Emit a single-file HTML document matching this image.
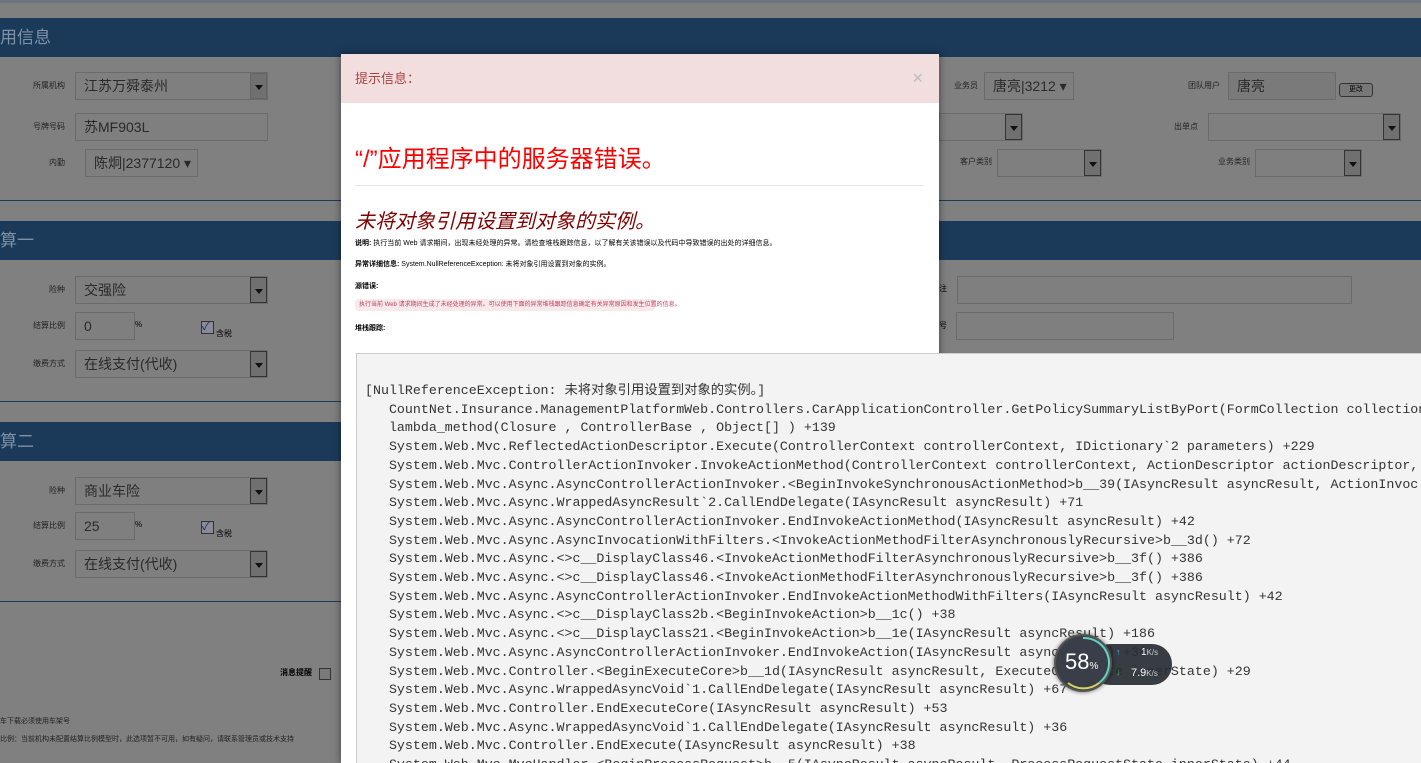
<!DOCTYPE html>
<html><head><meta charset="utf-8"><style>
*{margin:0;padding:0;box-sizing:border-box}
body{width:1421px;height:763px;overflow:hidden;position:relative;background:#808080;font-family:"Liberation Sans","Noto Sans CJK SC",sans-serif}
.a{position:absolute}
.bar{position:absolute;left:0;width:1421px;height:39px;background:#1b3a5a;color:#7f91a6;font-size:17px;line-height:39px}
.line{position:absolute;left:0;width:1421px;height:1px;background:#1d3b5b}
.lbl{position:absolute;font-size:8px;color:#222;text-align:right}
.inp{position:absolute;border:1px solid #6b6b6b;background:#7f7f7f;color:#2a2a2a;font-size:14px;padding-left:8px;line-height:26px;height:28px}
.sel-btn{position:absolute;right:0;top:0;width:17px;height:26px;border:1px solid #333;background:#707070}
.sel-btn:after{content:"";position:absolute;left:4px;top:11px;border:4px solid transparent;border-top:5px solid #111}
.mono{font-family:"Liberation Mono","Noto Sans CJK SC",monospace;font-size:13.3px;line-height:18.7px;color:#333;white-space:pre}
</style></head><body>
<div class="a" style="left:0;top:0;width:1421px;height:3px;background:#6c7480"></div>
<div class="bar" style="top:18px">用信息</div>
<div class="line" style="top:200px"></div>
<div class="bar" style="top:221px">算一</div>
<div class="line" style="top:401px"></div>
<div class="bar" style="top:422px">算二</div>
<div class="line" style="top:601px"></div>

<div class="lbl" style="left:20px;top:80px;width:45px">所属机构</div>
<div class="inp" style="left:75px;top:72px;width:193px">江苏万舜泰州<div class="sel-btn" style="border-color:#666"></div></div>
<div class="lbl" style="left:20px;top:121px;width:45px">号牌号码</div>
<div class="inp" style="left:75px;top:113px;width:193px">苏MF903L</div>
<div class="lbl" style="left:20px;top:157px;width:45px">内勤</div>
<div class="inp" style="left:85px;top:149px;width:113px">陈炯|2377120 ▾</div>

<div class="lbl" style="left:20px;top:284px;width:45px">险种</div>
<div class="inp" style="left:75px;top:276px;width:193px">交强险<div class="sel-btn"></div></div>
<div class="lbl" style="left:20px;top:320px;width:45px">结算比例</div>
<div class="inp" style="left:75px;top:312px;width:60px">0</div>
<div class="a" style="left:135px;top:320px;font-size:8px">%</div>
<div class="a" style="left:201px;top:321px;width:13px;height:13px;border:1px solid #333;background:#8a8a99;font-size:11px;line-height:11px;color:#1b2a66">✓</div>
<div class="a" style="left:216px;top:328px;font-size:8px">含税</div>
<div class="lbl" style="left:20px;top:358px;width:45px">缴费方式</div>
<div class="inp" style="left:75px;top:350px;width:193px">在线支付(代收)<div class="sel-btn"></div></div>

<div class="lbl" style="left:20px;top:485px;width:45px">险种</div>
<div class="inp" style="left:75px;top:477px;width:193px">商业车险<div class="sel-btn"></div></div>
<div class="lbl" style="left:20px;top:520px;width:45px">结算比例</div>
<div class="inp" style="left:75px;top:512px;width:60px">25</div>
<div class="a" style="left:135px;top:520px;font-size:8px">%</div>
<div class="a" style="left:201px;top:521px;width:13px;height:13px;border:1px solid #333;background:#8a8a99;font-size:11px;line-height:11px;color:#1b2a66">✓</div>
<div class="a" style="left:216px;top:528px;font-size:8px">含税</div>
<div class="lbl" style="left:20px;top:558px;width:45px">缴费方式</div>
<div class="inp" style="left:75px;top:550px;width:193px">在线支付(代收)<div class="sel-btn"></div></div>

<div class="a" style="left:280px;top:667px;font-size:8px;font-weight:bold">消息提醒</div>
<div class="a" style="left:319px;top:668px;width:12px;height:12px;border:1px solid #333;background:#7a7a7a"></div>
<div class="a" style="left:0;top:716px;font-size:7px;color:#222">车下载必须使用车架号</div>
<div class="a" style="left:0;top:734px;font-size:7px;color:#222">比例：当前机构未配置结算比例模型时，此选项暂不可用，如有疑问，请联系管理员或技术支持</div>

<div class="lbl" style="left:950px;top:80px;width:28px">业务员</div>
<div class="inp" style="left:984px;top:72px;width:90px;font-size:14px">唐亮|3212 ▾</div>
<div class="lbl" style="left:1180px;top:80px;width:40px">团队用户</div>
<div class="inp" style="left:1228px;top:72px;width:108px;background:#7a7a7a">唐亮</div>
<div class="a" style="left:1339px;top:83px;width:34px;height:14px;border:1px solid #333;border-radius:3px;background:#777;font-size:7px;text-align:center;line-height:12px">更改</div>
<div class="inp" style="left:939px;top:113px;width:84px"><div class="sel-btn"></div></div>
<div class="lbl" style="left:1170px;top:121px;width:28px">出单点</div>
<div class="inp" style="left:1208px;top:113px;width:193px"><div class="sel-btn"></div></div>
<div class="lbl" style="left:960px;top:156px;width:32px">客户类别</div>
<div class="inp" style="left:997px;top:149px;width:105px"><div class="sel-btn"></div></div>
<div class="lbl" style="left:1218px;top:156px;width:32px">业务类别</div>
<div class="inp" style="left:1255px;top:149px;width:107px"><div class="sel-btn"></div></div>
<div class="a" style="left:939px;top:283px;font-size:8px">注</div>
<div class="inp" style="left:957px;top:276px;width:395px"></div>
<div class="a" style="left:939px;top:320px;font-size:8px">号</div>
<div class="inp" style="left:956px;top:312px;width:218px"></div>

<!-- modal -->
<div class="a" style="left:341px;top:54px;width:598px;height:709px;background:#fff;box-shadow:0 0 8px rgba(0,0,0,.5)">
 <div style="height:49px;background:#f2dede;color:#a94442;font-size:13px;line-height:49px;padding-left:14px">提示信息：<span style="position:absolute;right:16px;top:0;color:#bbb;font-size:18px">×</span></div>
 <div class="a" style="left:14px;top:85px;color:#f00;font-size:24px;white-space:nowrap">“/”应用程序中的服务器错误。</div>
 <div class="a" style="left:14px;top:131px;width:568px;height:1px;background:#e4e4e4"></div>
 <div class="a" style="left:14px;top:151px;color:#800000;font-size:20px;font-style:italic;white-space:nowrap">未将对象引用设置到对象的实例。</div>
 <div class="a" style="left:14px;top:184px;font-size:7px;color:#000;white-space:nowrap"><b>说明:</b> 执行当前 Web 请求期间，出现未经处理的异常。请检查堆栈跟踪信息，以了解有关该错误以及代码中导致错误的出处的详细信息。</div>
 <div class="a" style="left:14px;top:205px;font-size:7px;color:#000;white-space:nowrap"><b>异常详细信息:</b> System.NullReferenceException: 未将对象引用设置到对象的实例。</div>
 <div class="a" style="left:14px;top:227px;font-size:7px;font-weight:bold">源错误:</div>
 <div class="a" style="left:14px;top:245px;width:300px;height:12px;background:#f8eaea;border-radius:4px;font-size:6px;color:#c04060;line-height:12px;padding-left:4px;white-space:nowrap">执行当前 Web 请求期间生成了未经处理的异常。可以使用下面的异常堆栈跟踪信息确定有关异常原因和发生位置的信息。</div>
 <div class="a" style="left:14px;top:269px;font-size:7px;font-weight:bold">堆栈跟踪:</div>
</div>
<div class="a" style="left:356px;top:353px;width:1065px;height:410px;background:#f3f3f3;border-top:1px solid #ccc;border-left:1px solid #ccc;overflow:hidden">
<div class="mono" style="position:absolute;left:8px;top:28px">[NullReferenceException: 未将对象引用设置到对象的实例。]
   CountNet.Insurance.ManagementPlatformWeb.Controllers.CarApplicationController.GetPolicySummaryListByPort(FormCollection collection
   lambda_method(Closure , ControllerBase , Object[] ) +139
   System.Web.Mvc.ReflectedActionDescriptor.Execute(ControllerContext controllerContext, IDictionary`2 parameters) +229
   System.Web.Mvc.ControllerActionInvoker.InvokeActionMethod(ControllerContext controllerContext, ActionDescriptor actionDescriptor,
   System.Web.Mvc.Async.AsyncControllerActionInvoker.&lt;BeginInvokeSynchronousActionMethod&gt;b__39(IAsyncResult asyncResult, ActionInvoc
   System.Web.Mvc.Async.WrappedAsyncResult`2.CallEndDelegate(IAsyncResult asyncResult) +71
   System.Web.Mvc.Async.AsyncControllerActionInvoker.EndInvokeActionMethod(IAsyncResult asyncResult) +42
   System.Web.Mvc.Async.AsyncInvocationWithFilters.&lt;InvokeActionMethodFilterAsynchronouslyRecursive&gt;b__3d() +72
   System.Web.Mvc.Async.&lt;&gt;c__DisplayClass46.&lt;InvokeActionMethodFilterAsynchronouslyRecursive&gt;b__3f() +386
   System.Web.Mvc.Async.&lt;&gt;c__DisplayClass46.&lt;InvokeActionMethodFilterAsynchronouslyRecursive&gt;b__3f() +386
   System.Web.Mvc.Async.AsyncControllerActionInvoker.EndInvokeActionMethodWithFilters(IAsyncResult asyncResult) +42
   System.Web.Mvc.Async.&lt;&gt;c__DisplayClass2b.&lt;BeginInvokeAction&gt;b__1c() +38
   System.Web.Mvc.Async.&lt;&gt;c__DisplayClass21.&lt;BeginInvokeAction&gt;b__1e(IAsyncResult asyncResult) +186
   System.Web.Mvc.Async.AsyncControllerActionInvoker.EndInvokeAction(IAsyncResult asyncResult) +38
   System.Web.Mvc.Controller.&lt;BeginExecuteCore&gt;b__1d(IAsyncResult asyncResult, ExecuteCoreState innerState) +29
   System.Web.Mvc.Async.WrappedAsyncVoid`1.CallEndDelegate(IAsyncResult asyncResult) +67
   System.Web.Mvc.Controller.EndExecuteCore(IAsyncResult asyncResult) +53
   System.Web.Mvc.Async.WrappedAsyncVoid`1.CallEndDelegate(IAsyncResult asyncResult) +36
   System.Web.Mvc.Controller.EndExecute(IAsyncResult asyncResult) +38
   System.Web.Mvc.MvcHandler.&lt;BeginProcessRequest&gt;b__5(IAsyncResult asyncResult, ProcessRequestState innerState) +44</div>
</div>

<!-- speed widget -->
<div class="a" style="left:1090px;top:644px;width:82px;height:41px;border-radius:20px;background:rgba(40,44,52,.92)"></div>
<div class="a" style="left:1054px;top:634px;width:58px;height:58px;border-radius:50%;background:#3a3e48;border:2px solid #555;box-shadow:0 0 4px rgba(0,0,0,.6)"></div>
<svg class="a" style="left:1054px;top:634px" width="58" height="58"><path d="M29 4 A25 25 0 0 1 45 49" fill="none" stroke="#5fd4c0" stroke-width="2"/><path d="M45 49 A25 25 0 0 1 14 49" fill="none" stroke="#d8d860" stroke-width="2"/></svg>
<div class="a" style="left:1065px;top:649px;color:#fff;font-size:22px">58<span style="font-size:10px">%</span></div>
<div class="a" style="left:1116px;top:647px;color:#4ab4f0;font-size:9px">↑</div>
<div class="a" style="left:1141px;top:647px;color:#fff;font-size:10px">1<span style="font-size:8px;color:#ccc">K/s</span></div>
<div class="a" style="left:1116px;top:667px;color:#3c3;font-size:9px">↓</div>
<div class="a" style="left:1131px;top:667px;color:#fff;font-size:11px">7.9<span style="font-size:8px;color:#ccc">K/s</span></div>
</body></html>
